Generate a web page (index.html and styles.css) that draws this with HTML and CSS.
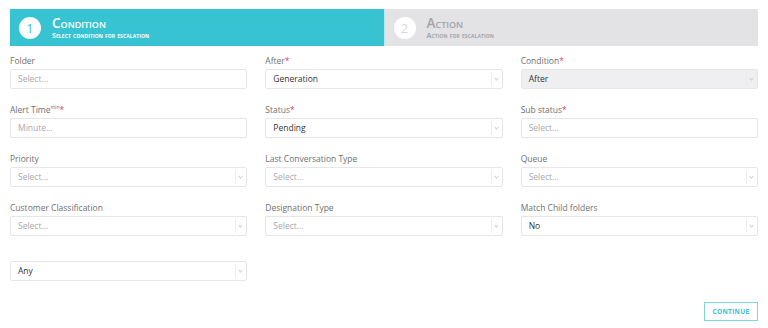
FILE: index.html
```html
<!DOCTYPE html>
<html lang="en">
<head>
  <meta charset="UTF-8" />
  <title>Escalation – Condition</title>
  <link rel="stylesheet" href="styles.css">
</head>
<body>
  <!-- Wizard steps -->
  <div class="steps">
    <div class="step active">
      <div class="step-num">1</div>
      <div class="step-text">
        <div class="step-title">Condition</div>
        <div class="step-sub">Select condition for escalation</div>
      </div>
    </div>
    <div class="step">
      <div class="step-num">2</div>
      <div class="step-text">
        <div class="step-title">Action</div>
        <div class="step-sub">Action for escalation</div>
      </div>
    </div>
  </div>

  <!-- Condition form -->
  <form class="cond-form">
    <div class="field">
      <label>Folder</label>
      <div class="input placeholder">Select...</div>
    </div>
    <div class="field">
      <label>After<span class="req">*</span></label>
      <div class="input select">Generation<span class="arrow"></span></div>
    </div>
    <div class="field">
      <label>Condition<span class="req">*</span></label>
      <div class="input select disabled">After<span class="arrow"></span></div>
    </div>

    <div class="field">
      <label>Alert Time<sup>min</sup><span class="req">*</span></label>
      <div class="input placeholder">Minute...</div>
    </div>
    <div class="field">
      <label>Status<span class="req">*</span></label>
      <div class="input select">Pending<span class="arrow"></span></div>
    </div>
    <div class="field">
      <label>Sub status<span class="req">*</span></label>
      <div class="input placeholder">Select...</div>
    </div>

    <div class="field">
      <label>Priority</label>
      <div class="input select placeholder">Select...<span class="arrow"></span></div>
    </div>
    <div class="field">
      <label>Last Conversation Type</label>
      <div class="input select placeholder">Select...<span class="arrow"></span></div>
    </div>
    <div class="field">
      <label>Queue</label>
      <div class="input select placeholder">Select...<span class="arrow"></span></div>
    </div>

    <div class="field">
      <label>Customer Classification</label>
      <div class="input select placeholder">Select...<span class="arrow"></span></div>
    </div>
    <div class="field">
      <label>Designation Type</label>
      <div class="input select placeholder">Select...<span class="arrow"></span></div>
    </div>
    <div class="field">
      <label>Match Child folders</label>
      <div class="input select">No<span class="arrow"></span></div>
    </div>

    <div class="field last">
      <div class="input select">Any<span class="arrow"></span></div>
    </div>
  </form>

  <div class="actions">
    <button class="continue-btn" type="button">Continue</button>
  </div>
</body>
</html>
```

FILE: styles.css
```css
body {
  margin: 0;
  padding: 9px 10px 0 10px;
  font-family: 'Open Sans', sans-serif;
  background: #fff;
  color: #555;
}

.steps {
  display: flex;
  height: 37px;
}

.step {
  flex: 1;
  display: flex;
  align-items: center;
  gap: 11px;
  padding-left: 9px;
  background: #e3e3e5;
  color: #a4a4a8;
}

.step + .step {
  border-left: 1px solid #b8e8ee;
}

.step.active {
  background: #37c3d2;
  color: #fff;
}

.step-num {
  width: 22px;
  height: 22px;
  border-radius: 50%;
  background: #fff;
  color: #d6d6d8;
  font-size: 13px;
  line-height: 22px;
  text-align: center;
}

.step.active .step-num {
  color: #37c3d2;
}

.step-title {
  font-size: 13.5px;
  font-weight: 600;
  font-variant: small-caps;
  line-height: 17px;
  height: 16px;
}

.step-sub {
  font-size: 7px;
  font-variant: small-caps;
  font-weight: 700;
  text-transform: lowercase;
  line-height: 10px;
  letter-spacing: 0.1px;
}

.step-sub::first-letter {
  text-transform: uppercase;
}

.cond-form {
  display: grid;
  grid-template-columns: repeat(3, 1fr);
  column-gap: 18px;
  row-gap: 15px;
  margin-top: 9px;
}

.field label {
  display: block;
  font-size: 8.5px;
  line-height: 12px;
  height: 12px;
  margin-bottom: 2px;
  color: #707070;
}

.field label sup {
  font-size: 5px;
  line-height: 0;
}

.req {
  color: #e0405a;
}

.field.last {
  margin-top: 10px;
}

.input {
  position: relative;
  height: 20px;
  box-sizing: border-box;
  border: 1px solid #e6e6e8;
  border-radius: 2px;
  padding: 0 7px;
  font-size: 8.5px;
  line-height: 18px;
  color: #333;
  background: #fff;
}

.input.placeholder {
  color: #a8a8ac;
}

.input.disabled {
  background: #efeff1;
}

.input.select .arrow {
  position: absolute;
  right: 0;
  top: 2px;
  bottom: 2px;
  width: 10px;
  border-left: 1px solid #ececee;
}

.input.select .arrow::after {
  content: "";
  position: absolute;
  left: 3px;
  top: 5px;
  width: 2px;
  height: 2px;
  border-right: 1px solid #cfcfd2;
  border-bottom: 1px solid #cfcfd2;
  transform: rotate(45deg);
}

.actions {
  display: flex;
  justify-content: flex-end;
  margin-top: 21px;
}

.continue-btn {
  width: 54px;
  height: 19px;
  padding: 0;
  background: #fff;
  border: 1px solid #7fd8e0;
  color: #37c3d2;
  font-family: 'Open Sans', sans-serif;
  font-size: 6.5px;
  font-weight: 700;
  text-transform: uppercase;
  letter-spacing: 0.3px;
}
```
